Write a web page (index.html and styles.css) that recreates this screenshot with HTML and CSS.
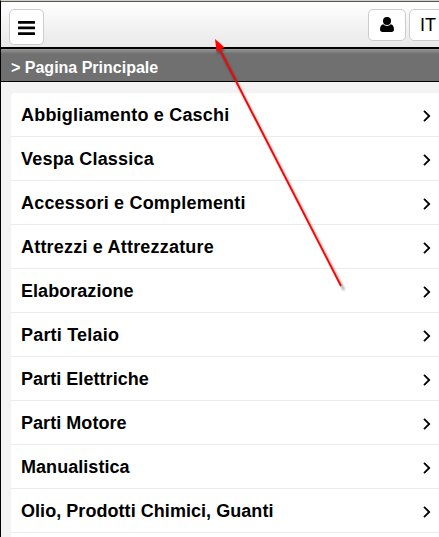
FILE: index.html
```html
<!DOCTYPE html>
<html lang="it">
<head>
  <meta charset="UTF-8">
  <title>Pagina Principale</title>
  <link rel="stylesheet" href="styles.css">
</head>
<body>
  <svg width="0" height="0" class="defs"><symbol id="chevron" viewBox="0 0 8 12"><path d="M1 .800L6.200 6L1 11.200" fill="none" stroke="#000" stroke-width="1.800"/></symbol></svg>
  <header class="topbar">
    <button class="btn btn-menu" aria-label="Menu">
      <svg width="17" height="15" viewBox="0 0 17 15"><rect width="17" height="2.700" rx=".5"/><rect y="5.500" width="17" height="2.700" rx=".5"/><rect y="11.200" width="17" height="2.800" rx=".5"/></svg>
    </button>
    <div class="topbar-right">
      <button class="btn btn-user" aria-label="Account">
        <svg width="14" height="16" viewBox="0 0 14 16"><path d="M7 0a4 4 0 1 1 0 8a4 4 0 0 1 0-8zM3.300 7.200C4.300 8.300 5.600 8.900 7 8.900s2.700-.6 3.700-1.700C13 7.300 14 9.800 14 12.600c0 1.500-1 2.400-2.400 2.400H2.400C1 15 0 14.100 0 12.600 0 9.800 1 7.300 3.300 7.200z"/></svg>
      </button>
      <button class="btn btn-lang">IT</button>
    </div>
  </header>
  <div class="breadcrumb">&gt; Pagina Principale</div>
  <ul class="menu">
    <li class="wide"><a>Abbigliamento e Caschi</a><svg class="chevron"><use href="#chevron"/></svg></li>
    <li class="wide"><a>Vespa Classica</a><svg class="chevron"><use href="#chevron"/></svg></li>
    <li class="wide"><a>Accessori e Complementi</a><svg class="chevron"><use href="#chevron"/></svg></li>
    <li class="wide"><a>Attrezzi e Attrezzature</a><svg class="chevron"><use href="#chevron"/></svg></li>
    <li><a>Elaborazione</a><svg class="chevron"><use href="#chevron"/></svg></li>
    <li class="wide"><a>Parti Telaio</a><svg class="chevron"><use href="#chevron"/></svg></li>
    <li><a>Parti Elettriche</a><svg class="chevron"><use href="#chevron"/></svg></li>
    <li><a>Parti Motore</a><svg class="chevron"><use href="#chevron"/></svg></li>
    <li><a>Manualistica</a><svg class="chevron"><use href="#chevron"/></svg></li>
    <li><a>Olio, Prodotti Chimici, Guanti</a><svg class="chevron"><use href="#chevron"/></svg></li>
  </ul>
  <svg class="arrow" width="439" height="537" viewBox="0 0 439 537">
    <g class="arrow-shadow"><path d="M220 50L344 290" stroke="#000" stroke-width="2"/><path d="M218 42l7 8-8 4z"/></g>
    <path d="M219 48L341 286" stroke="#f00" stroke-width="1.800"/>
    <path d="M215 39l9.500 8.500-8 4z" fill="#f00"/>
  </svg>
</body>
</html>
```
FILE: styles.css
```css
* { box-sizing: border-box; }
body { margin: 0; height: 537px; overflow: hidden; background: #f3f3f3; border-left: 1px solid #000; border-top: 1px solid #d4d0c8; font-family: "Liberation Sans", Arial, sans-serif; color: #000; }
.defs { position: absolute; }
.topbar { height: 48px; display: flex; justify-content: space-between; align-items: flex-start; padding: 7px 0 0 8px; border-top: 1px solid #555; border-bottom: 2px solid #000; background: linear-gradient(#fff, #e8e8e8); }
.topbar-right { display: flex; gap: 3px; margin-right: -8px; }
.btn { display: flex; align-items: center; justify-content: center; padding: 0; background: #fff; border: 1px solid #ccc; border-radius: 5px; color: #000; font-family: inherit; }
.btn-menu { width: 35px; height: 36px; padding-top: 3px; }
.btn-user { width: 38px; height: 32px; }
.btn-lang { width: 38px; height: 32px; font-size: 18px; }
.breadcrumb { height: 33px; padding-left: 10px; line-height: 37px; font-size: 16px; font-weight: bold; color: #fff; background: linear-gradient(#999, #707070 5px); border-bottom: 1px solid #000; }
.menu { list-style: none; height: 444px; margin: 11px 0 0 10px; padding: 0; background: #fff; border-radius: 4px 0 0 0; }
.menu li { height: 44px; padding: 2px 8px 0 10px; display: flex; align-items: center; justify-content: space-between; border-bottom: 1px solid #ebebeb; font-size: 18px; font-weight: bold; letter-spacing: .05px; }
.menu li.wide { letter-spacing: .2px; }
.chevron { width: 8px; height: 12px; }
.arrow { position: absolute; top: 0; left: 0; pointer-events: none; }
.arrow-shadow { opacity: .4; filter: blur(1px); }
```
